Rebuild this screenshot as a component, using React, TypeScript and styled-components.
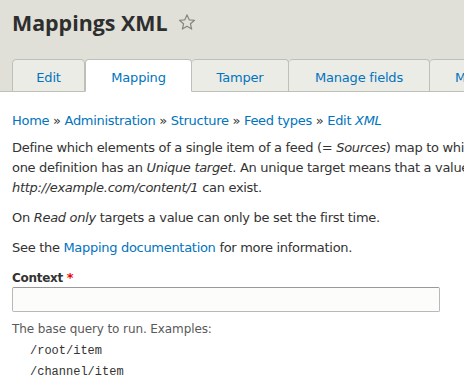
import React from 'react';
import styled, { createGlobalStyle } from 'styled-components';

const GlobalStyle = createGlobalStyle`
  html, body {
    margin: 0;
    padding: 0;
    background: #fff;
    overflow: hidden;
  }
  body {
    font-family: "DejaVu Sans", "Lucida Grande", sans-serif;
    font-size: 13px;
    letter-spacing: -0.3px;
    color: #333;
  }
`;

const tabs = [
  { label: 'Edit', width: 73 },
  { label: 'Mapping', width: 107, active: true },
  { label: 'Tamper', width: 97 },
  { label: 'Manage fields', width: 141 },
  { label: 'Manage display', width: 150 },
];

const Header = styled.header`
  background: #e0e0d8;
  padding: 4px 12px 0;
  border-bottom: 1px solid #bfbfba;
  width: 900px;
`;

const Title = styled.h1`
  display: flex;
  align-items: center;
  gap: 10px;
  margin: 0;
  height: 36px;
  font-family: "Open Sans", sans-serif;
  font-size: 21.4px;
  font-weight: 700;
  letter-spacing: 0;
  color: #2e2e2e;
`;

const TabList = styled.ul`
  display: flex;
  list-style: none;
  margin: 19px 0 -1px;
  padding: 0;
`;

const Tab = styled.li<{ $active?: boolean; $width: number }>`
  width: ${(p) => p.$width}px;
  flex: none;
  height: 33px;
  box-sizing: border-box;
  padding-top: 4px;
  display: flex;
  align-items: center;
  justify-content: center;
  background: ${(p) => (p.$active ? '#fff' : '#ecece7')};
  border: 1px solid #bfbfba;
  border-left-width: ${(p) => (p.$active ? 1 : 0)}px;
  border-bottom-color: ${(p) => (p.$active ? '#fff' : '#bfbfba')};
  border-radius: 4px 4px 0 0;
  color: #0074bd;
  letter-spacing: -0.2px;
  &:first-child {
    border-left-width: 1px;
  }
`;

const Content = styled.main`
  padding: 19px 12px 0;
  width: 900px;
  white-space: nowrap;
`;

const Link = styled.a`
  color: #0074bd;
  text-decoration: none;
`;

const Breadcrumb = styled.nav`
  line-height: 20px;
  margin-bottom: 7px;
`;

const Para = styled.p`
  margin: 0 0 10px;
  line-height: 20px;
`;

const Label = styled.label`
  display: block;
  font-size: 12px;
  font-weight: 700;
  line-height: 20px;
  margin-top: 10px;
`;

const Required = styled.span`
  color: #e00;
  margin-left: 4px;
  font-size: 13px;
`;

const Input = styled.input`
  display: block;
  box-sizing: border-box;
  width: 428px;
  height: 25px;
  margin: -1px 0 0;
  border: 1px solid #b8b8b8;
  border-top-color: #999;
  border-radius: 2px;
  background: #fcfcfa;
`;

const Description = styled.div`
  font-size: 12px;
  letter-spacing: -0.1px;
  color: #595959;
  margin-top: 7px;
  line-height: 20px;
`;

const Example = styled.code`
  display: block;
  font-family: "Liberation Mono", monospace;
  font-size: 12px;
  letter-spacing: 0;
  color: #333;
  line-height: 21px;
  padding-left: 18px;
  &:first-of-type {
    margin-top: 2px;
  }
`;

export default function App() {
  return (
    <>
      <GlobalStyle />
      <Header>
        <Title>
          Mappings XML
          <svg width="18" height="18" viewBox="0 0 24 24">
            <path
              d="M12 2.5l2.9 6.6 7.1.6-5.4 4.7 1.6 7-6.2-3.7-6.2 3.7 1.6-7L2 9.7l7.1-.6z"
              fill="none"
              stroke="#85857d"
              strokeWidth="1.6"
              strokeLinejoin="round"
            />
          </svg>
        </Title>
        <TabList>
          {tabs.map((t) => (
            <Tab key={t.label} $active={t.active} $width={t.width}>
              {t.label}
            </Tab>
          ))}
        </TabList>
      </Header>
      <Content>
        <Breadcrumb>
          <Link href="#">Home</Link> » <Link href="#">Administration</Link> »{' '}
          <Link href="#">Structure</Link> » <Link href="#">Feed types</Link> »{' '}
          <Link href="#">
            Edit <em>XML</em>
          </Link>
        </Breadcrumb>
        <Para>
          Define which elements of a single item of a feed (= <em>Sources</em>) map to which elements of a
          Drupal entity (= <em>Targets</em>). Make sure that at least
          <br />
          one definition has an <em>Unique target</em>. An unique target means that a value for a target can
          only occur once. E.g. only one item with the URL
          <br />
          <em>http://example.com/content/1</em> can exist.
        </Para>
        <Para>
          On <em>Read only</em> targets a value can only be set the first time.
        </Para>
        <Para>
          See the <Link href="#">Mapping documentation</Link> for more information.
        </Para>
        <Label>
          Context<Required>*</Required>
        </Label>
        <Input />
        <Description>The base query to run. Examples:</Description>
        <Example>/root/item</Example>
        <Example>/channel/item</Example>
      </Content>
    </>
  );
}
